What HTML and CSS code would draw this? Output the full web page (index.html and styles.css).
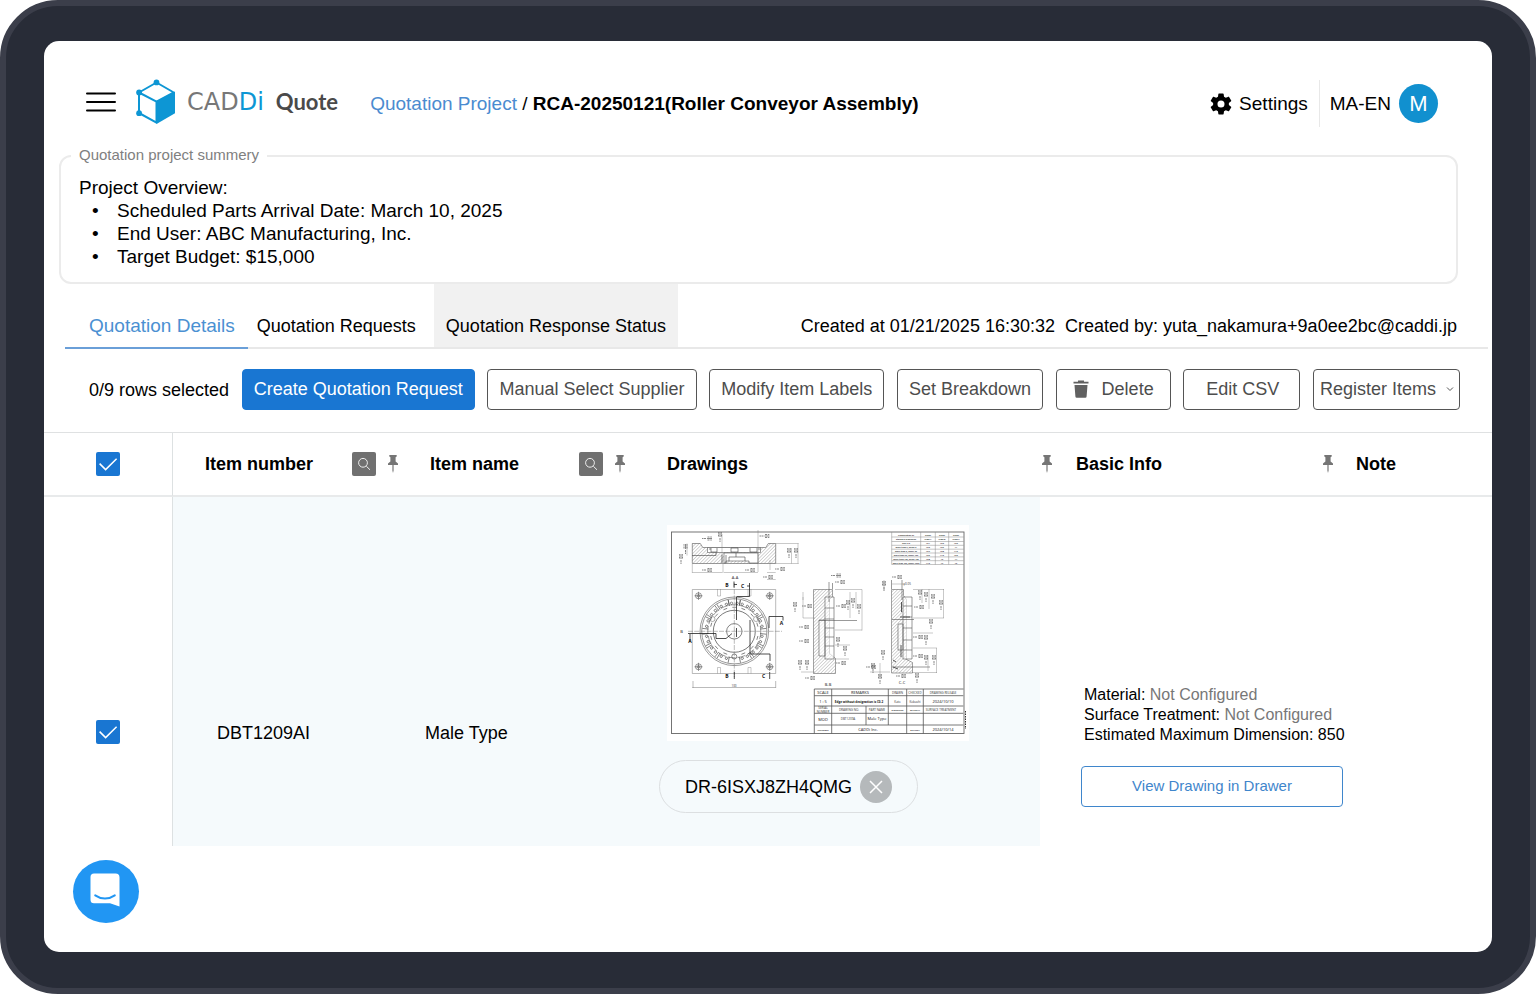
FILE: index.html
```html
<!DOCTYPE html>
<html lang="en">
<head>
<meta charset="utf-8">
<meta name="viewport" content="width=device-width, initial-scale=1">
<title>CADDi Quote</title>
<link rel="stylesheet" href="styles.css">
</head>
<body>
<svg class="defs" width="0" height="0" aria-hidden="true">
  <symbol id="pin" viewBox="0 0 10 18"><path d="M1.3 0h7.4v1.6L7.6 2.2v4.2L10 8.6V10H5.6v5.6L5 18l-.6-2.4V10H0V8.6l2.4-2.2V2.2L1.3 1.6z"/></symbol>
  <symbol id="search" viewBox="0 0 24 24"><circle cx="11" cy="10.8" r="4.4"/><path d="M14.3 14.2l3.7 3.6"/></symbol>
  <symbol id="check" viewBox="0 0 24 24"><path d="M3.6 11.6l6 6L20.6 6.8"/></symbol>
</svg>
<div class="device">
  <div class="screen">
    <header class="header">
      <button class="menu" type="button" aria-label="Menu">
        <svg width="30" height="20" viewBox="0 0 30 20"><path d="M1 1.400h28M1 10h28M1 18.600h28"/></svg>
      </button>
      <a class="brand" href="#">
        <svg class="brand-cube" width="40" height="46" viewBox="0 0 40 46" aria-hidden="true">
          <path class="cube-line" d="M20.500 3.500L37.800 13.500 20.500 22.600 3 13.500zM3 13.500V34l17.500 9.600V22.600"/>
          <path class="cube-fill" d="M20.500 22.300L39 12.600V34.300L20.500 45z"/>
          <circle class="cube-fill" cx="20.500" cy="3.400" r="2.900"/><circle class="cube-fill" cx="3.100" cy="13.400" r="2.900"/><circle class="cube-fill" cx="3.100" cy="34.200" r="2.900"/>
        </svg>
        <span class="brand-name">CAD<span class="brand-accent">Di</span></span>
        <span class="brand-product">Quote</span>
      </a>
      <nav class="crumbs" aria-label="Breadcrumb"><a href="#">Quotation Project</a> / <strong>RCA-20250121(Roller Conveyor Assembly)</strong></nav>
      <button class="settings" type="button">
        <svg width="22" height="22" viewBox="2 2 20 20" aria-hidden="true"><path d="M19.140 12.940c.040-.300.060-.610.060-.940 0-.320-.020-.640-.070-.940l2.030-1.580a.49.49 0 0 0 .120-.610l-1.920-3.320a.488.488 0 0 0-.590-.220l-2.390.960c-.500-.380-1.030-.700-1.620-.940l-.360-2.540a.484.484 0 0 0-.480-.410h-3.840c-.240 0-.430.170-.470.410l-.360 2.540c-.590.240-1.130.570-1.620.940l-2.390-.960c-.220-.080-.470 0-.590.220L2.740 8.870c-.120.210-.080.470.120.610l2.030 1.580c-.050.300-.090.630-.090.940s.020.640.070.940l-2.030 1.580a.49.49 0 0 0-.120.610l1.920 3.320c.120.220.370.290.590.220l2.390-.960c.500.380 1.030.700 1.620.940l.360 2.540c.050.240.240.410.480.410h3.840c.240 0 .440-.170.470-.410l.360-2.540c.590-.240 1.130-.560 1.620-.940l2.390.960c.220.080.470 0 .590-.220l1.920-3.320c.120-.220.070-.470-.120-.610l-2.010-1.580zM12 15.200a3.200 3.200 0 1 1 0-6.400 3.200 3.200 0 0 1 0 6.400z"/></svg>
        Settings
      </button>
      <div class="account"><span>MA-EN</span><span class="avatar">M</span></div>
    </header>

    <fieldset class="summary">
      <legend>Quotation project summery</legend>
      <p>Project Overview:</p>
      <ul>
        <li>Scheduled Parts Arrival Date: March 10, 2025</li>
        <li>End User: ABC Manufacturing, Inc.</li>
        <li>Target Budget: $15,000</li>
      </ul>
    </fieldset>

    <div class="tabbar">
      <nav class="tabs">
        <a class="tab tab-active" href="#">Quotation Details</a>
        <a class="tab tab-requests" href="#">Quotation Requests</a>
        <a class="tab tab-hover" href="#">Quotation Response Status</a>
      </nav>
      <div class="meta"><span>Created at 01/21/2025 16:30:32</span><span>Created by: yuta_nakamura+9a0ee2bc@caddi.jp</span></div>
    </div>

    <div class="toolbar">
      <span>0/9 rows selected</span>
      <button class="btn btn-primary" type="button">Create Quotation Request</button>
      <button class="btn" type="button">Manual Select Supplier</button>
      <button class="btn" type="button">Modify Item Labels</button>
      <button class="btn" type="button">Set Breakdown</button>
      <button class="btn btn-delete" type="button">
        <svg width="16" height="18" viewBox="0 0 16 18" aria-hidden="true"><path d="M5 .5h6v1.200h4.500V3.500H.5V1.700H5zM1.500 5h13l-.9 11.500q-.1 1.200-1.300 1.200H3.700q-1.200 0-1.300-1.200z"/></svg>
        Delete
      </button>
      <button class="btn btn-csv" type="button">Edit CSV</button>
      <button class="btn btn-register" type="button" aria-haspopup="menu">Register Items
        <svg width="8" height="6" viewBox="0 0 8 6" aria-hidden="true"><path d="M1 1.500l3 3 3-3"/></svg>
      </button>
    </div>

    <table class="items">
      <colgroup><col class="col-check"><col class="col-number"><col class="col-name"><col class="col-drawings"><col class="col-info"><col class="col-note"></colgroup>
      <thead>
        <tr>
          <th><label class="check"><input type="checkbox" checked aria-label="Select all rows"><svg aria-hidden="true"><use href="#check"/></svg></label></th>
          <th class="cell-number"><div class="head"><span class="title">Item number</span><button class="find" type="button" aria-label="Search item number"><svg><use href="#search"/></svg></button><svg class="pin" aria-hidden="true"><use href="#pin"/></svg></div></th>
          <th class="cell-name"><div class="head"><span class="title">Item name</span><button class="find" type="button" aria-label="Search item name"><svg><use href="#search"/></svg></button><svg class="pin" aria-hidden="true"><use href="#pin"/></svg></div></th>
          <th class="cell-drawings">Drawings</th>
          <th class="cell-info"><div class="head head-info"><svg class="pin" aria-hidden="true"><use href="#pin"/></svg><span class="title">Basic Info</span><svg class="pin" aria-hidden="true"><use href="#pin"/></svg></div></th>
          <th class="cell-note">Note</th>
        </tr>
      </thead>
      <tbody>
        <tr>
          <td class="low"><label class="check"><input type="checkbox" checked aria-label="Select DBT1209AI"><svg aria-hidden="true"><use href="#check"/></svg></label></td>
          <td class="cell-number tint low">DBT1209AI</td>
          <td class="cell-name tint low">Male Type</td>
          <td class="cell-drawings tint">
            <svg class="drawing" viewBox="667 525 302 216" role="img" aria-label="Part drawing DBT1209A">
              <defs>
                <pattern id="hatch" width="2.400" height="2.400" patternUnits="userSpaceOnUse" patternTransform="rotate(45)"><path d="M0 0V2.400" stroke="#888" stroke-width=".7"/></pattern>
                <g id="dim"><path d="M0 0h1.500M2 0h2M5 0h5M5.500-1.500h2M8.300-1.500h1.500M5.500 1.500h2M8.300 1.500h1.500" stroke="#555" stroke-width=".7"/></g>
                <g id="bolt"><circle r="3"/><circle r="1.300"/><path d="M-4 0h8M0-4v8"/></g>
                <g id="slot"><circle cx="-2.800" cy="-28" r="1.200"/><circle cx="2.800" cy="-28" r="1.200"/><path d="M-5-25.500l-1-6M5-25.500l1-6M-2-24h4"/></g>
              </defs>
              <rect x="667" y="525" width="302" height="216" fill="#fff"/>
              <g fill="none" stroke="#777" stroke-width=".6">
                <rect x="671.500" y="532" width="292.500" height="201.500" stroke="#666" stroke-width=".9"/>
                <!-- top section -->
                <path d="M692.300 543.500h8l2.500 4h63l2.500-4h7.400v20h-83.400z" fill="url(#hatch)" stroke="#555"/>
                <path d="M707.500 547.500h53v5h-53z" fill="#fff" stroke="#555"/>
                <path d="M711 548v4h6v-4M731 548h7v4h-7zM750 548v4h7v-4M709 549h2M758 549h2" stroke="#444"/>
                <path d="M724 563v-10h34v10h-9v-2h-23v2z" fill="#fff" stroke="#555"/>
                <path d="M729 561v-4h16v4M736 553v4M692 555.500h24v-3M722 563v-8M726 563v-8" stroke="#444"/>
                <path d="M687 543.500v12M692.300 564v9M723 564v9M692.300 572.500h30M724 572.500h34M758 530v42M767 572.500h8.700M767 579.500h8.700M775.700 543.500h23M775.700 563.500h23M791.500 548v15.500M798 543.500v20M722 534v29M770 560v10" stroke-width=".4"/>
                <!-- plate -->
                <path d="M692.300 589.500h83.400v84h-83.400zM693 681v7M775.700 681v7M692.300 687.500h83.400" stroke-width=".5"/>
                <g stroke="#555"><circle cx="734.300" cy="631.300" r="34.300"/><circle cx="734.300" cy="631.300" r="32.600"/><circle cx="734.300" cy="631.300" r="26.500" stroke-dasharray="8 2"/><circle cx="734.300" cy="631.300" r="21" stroke="#222"/><circle cx="734.300" cy="631.300" r="7.700" stroke="#333"/></g>
                <g transform="translate(734.300 631.300)" stroke="#444"><use href="#slot"/><use href="#slot" transform="rotate(22)"/><use href="#slot" transform="rotate(48)"/><use href="#slot" transform="rotate(74)"/><use href="#slot" transform="rotate(106)"/><use href="#slot" transform="rotate(132)"/><use href="#slot" transform="rotate(158)"/><use href="#slot" transform="rotate(202)"/><use href="#slot" transform="rotate(228)"/><use href="#slot" transform="rotate(254)"/><use href="#slot" transform="rotate(286)"/><use href="#slot" transform="rotate(312)"/><use href="#slot" transform="rotate(338)"/></g>
                <circle cx="712.500" cy="619" r="2.500"/><circle cx="756" cy="619" r="2.500"/><circle cx="734.300" cy="656.500" r="2.500" stroke="#333"/>
                <g stroke="#555"><use href="#bolt" x="698.500" y="595.800"/><use href="#bolt" x="769.700" y="595.800"/><use href="#bolt" x="698.500" y="666.800"/><use href="#bolt" x="769.700" y="666.800"/></g>
                <path d="M688 631.300h94M734.300 583v94" stroke-dasharray="5 1.200" stroke-width=".5"/>
                <path d="M717.500 589v7h3v-7M748 589v7h3v-7M717.500 673.500v-6h3v6M748 673.500v-6h3v6" stroke-width=".4"/>
                <path d="M734 581.500v6M736.500 597v23M749.500 583v13.500h-13M769 628v-11.500h14v4M690 634v8M688 633.500h28v5h10l6-5M736.500 628v9M750 620v34h20v7M734.300 672v7M769.700 672v7M737 584.500h-3M747 586h3" stroke="#222" stroke-width=".8"/>
                <!-- section B-B -->
                <path d="M813.500 589.500h19v7l-3 3v54l6 5v15h-22z" fill="url(#hatch)" stroke="#666"/>
                <path d="M825 597h9v62h-9zM819 620h6v36h-6zM825 608h9M825 619h9M825 628h9M825 637h9M825 646h9M819 620.500h38M829 582v20M832.500 583v6" fill="#fff" fill-opacity=".6" stroke="#555"/>
                <path d="M835 589.500h27M850 592v26M856 592v17M862 589.500v41M835 630h27M835 645h15M835 659h14M803 592v26M803 618h12M801 672h14M803 600v-3" stroke-width=".4"/>
                <!-- section C-C -->
                <path d="M891.500 589.500h12v6l3 4v60l6 3v10.500h-21z" fill="url(#hatch)" stroke="#666"/>
                <path d="M903 597h9v62h-9zM898 624h5v26h-5zM903 606h9M903 617h9M903 628h9M903 640h9M903 650h9M902 580v20M891.500 580v9M892 619.500h22M892 667h38" fill="#fff" fill-opacity=".6" stroke="#555"/>
                <path d="M901.500 602v10M900 617h10M901 645v12M893 660l3 2M893 667l5 2" stroke="#444" stroke-width=".9"/>
                <path d="M913 589.500h31M922 589v14M929 589v20M943.500 589v29M913 618h31M913 633h20M913 648h24M936.500 648v25M912 672.500h25M884 590v-10M892 584h11M870 672h20M880 663v14M928 655v16" stroke-width=".4"/>
              </g>
              <g>
                <use href="#dim" x="702" y="538.500"/><use href="#dim" x="759.500" y="536"/><use href="#dim" x="702" y="570"/><use href="#dim" x="745" y="570"/><use href="#dim" x="775" y="569"/><use href="#dim" x="763" y="577"/>
                <use href="#dim" transform="translate(720 542) rotate(-90)"/><use href="#dim" transform="translate(685.500 554) rotate(-90)"/><use href="#dim" transform="translate(681 564) rotate(-90)"/><use href="#dim" transform="translate(789 558) rotate(-90)"/><use href="#dim" transform="translate(796 558) rotate(-90)"/>
                <use href="#dim" x="831" y="575.500"/><use href="#dim" x="835" y="582"/><use href="#dim" x="892" y="577"/><use href="#dim" x="836" y="606"/><use href="#dim" x="802" y="606"/><use href="#dim" x="799" y="627"/><use href="#dim" x="799" y="641"/><use href="#dim" x="805" y="678"/><use href="#dim" x="836" y="663"/><use href="#dim" x="896" y="676"/><use href="#dim" x="866" y="667"/><use href="#dim" x="913" y="637"/><use href="#dim" x="913" y="656"/><use href="#dim" x="914" y="607"/>
                <use href="#dim" transform="translate(795 612) rotate(-90)"/><use href="#dim" transform="translate(848 610) rotate(-90)"/><use href="#dim" transform="translate(853 608) rotate(-90)"/><use href="#dim" transform="translate(859 614) rotate(-90)"/><use href="#dim" transform="translate(800 670) rotate(-90)"/><use href="#dim" transform="translate(807 670) rotate(-90)"/><use href="#dim" transform="translate(838 647) rotate(-90)"/><use href="#dim" transform="translate(845 656) rotate(-90)"/><use href="#dim" transform="translate(884 591) rotate(-90)"/><use href="#dim" transform="translate(920 600) rotate(-90)"/><use href="#dim" transform="translate(926 602) rotate(-90)"/><use href="#dim" transform="translate(933 604) rotate(-90)"/><use href="#dim" transform="translate(941 610) rotate(-90)"/><use href="#dim" transform="translate(931 629) rotate(-90)"/><use href="#dim" transform="translate(926 645) rotate(-90)"/><use href="#dim" transform="translate(934 665) rotate(-90)"/><use href="#dim" transform="translate(926 665) rotate(-90)"/><use href="#dim" transform="translate(873 673) rotate(-90)"/><use href="#dim" transform="translate(880 684) rotate(-90)"/><use href="#dim" transform="translate(917 683) rotate(-90)"/><use href="#dim" transform="translate(883 660) rotate(-90)"/>
              </g>
              <!-- tolerance table and title block -->
              <g fill="none" stroke="#888" stroke-width=".5">
                <path d="M891.700 532v32.500H964M920.700 532v32.500M935.300 532v32.500M948.700 532v32.500M891.700 537h72M891.700 541.500h72M891.700 545.300h72M891.700 549.200h72M891.700 553h72M891.700 556.900h72M891.700 560.700h72"/>
                <path d="M814.300 733.500V689H963.500M814.300 695.700h149M814.300 706h149M814.300 713.300h149M814.300 725h149M831.700 689v44.500M888.300 689v36M906.700 689v44.500M923.300 689v44.500M866 706v19" stroke="#555" stroke-width=".8"/>
              </g>
              <g class="grade-text">
                <text x="906" y="535.700">Classification of</text><text x="906" y="540.300">standard dimension</text><text x="906" y="544.300">Over 0.5</text><text x="906" y="548.200">More than 3, under 6</text><text x="906" y="552">More than 6, under 30</text><text x="906" y="555.900">More than 30, under 120</text><text x="906" y="559.700">More than 120, under 400</text><text x="906" y="563.600">More than 400, under 1000</text>
                <text x="928" y="535.700">Grade</text><text x="942" y="535.700">Grade</text><text x="956" y="535.700">Grade</text><text x="928" y="540.300">Class A</text><text x="942" y="540.300">Class B</text><text x="956" y="540.300">Class C</text>
                <text x="928" y="544.300">±0.1</text><text x="942" y="544.300">±0.2</text><text x="956" y="544.300">±0.5</text><text x="928" y="548.200">±0.2</text><text x="942" y="548.200">±0.5</text><text x="956" y="548.200">±1</text><text x="928" y="552">±0.3</text><text x="942" y="552">±0.8</text><text x="956" y="552">±1.5</text><text x="928" y="555.900">±0.5</text><text x="942" y="555.900">±1.2</text><text x="956" y="555.900">±2.5</text><text x="928" y="559.700">±0.8</text><text x="942" y="559.700">±2</text><text x="956" y="559.700">±4</text><text x="928" y="563.600">±1.2</text><text x="942" y="563.600">±3</text><text x="956" y="563.600">±6</text>
                <text x="897.500" y="711">DIMENSION</text><text x="915" y="711">MATERIAL</text><text x="823" y="730.500">CUSTOMER</text><text x="915" y="730.500">DELIVERY</text>
              </g>
              <g class="note-text">
                <text x="897.500" y="693.500">DRAWN</text><text x="915" y="693.500">CHECKED</text><text x="943" y="693.500">DRAWING RELEASE</text><text x="897.500" y="702.500">Kato</text><text x="915" y="702.500">Kobashi</text>
                <text x="823" y="709">SERIAL</text><text x="823" y="712.500">NUMBER</text><text x="849" y="711">DRAWING NO.</text><text x="877" y="711">PART NAME</text><text x="941" y="711">SURFACE TREATMENT</text>
                <text x="734" y="687">100</text><text x="907" y="584.500">φ0.05</text><text x="848" y="720">DBT1209A</text>
              </g>
              <g class="block-text">
                <text x="823" y="694">SCALE</text><text x="860" y="694">REMARKS</text><text x="823" y="702.500">1 : 5</text><text class="edge" x="859" y="702.500">Edge without designation is C0.2</text><text x="943" y="702.500">2024/10/10</text>
                <text x="823" y="720.500">MOD</text><text x="877" y="720">Male Type</text><text x="868" y="731">CADDi Inc.</text><text x="943" y="731">2024/10/14</text>
                <text x="735" y="578.500">A-A</text><text x="828" y="686">B-B</text><text x="902" y="684">C-C</text>
                <text x="681.500" y="633">B</text>
              </g>
              <g class="mark-text">
                <text x="690" y="643">A</text><text x="781.500" y="625">A</text><text x="727" y="587">B</text><text x="742.500" y="588">C</text><text x="727" y="678">B</text><text x="763.500" y="678">C</text>
              </g>
              <path d="M965.500 711v18" stroke="#333" stroke-width="1" stroke-dasharray="1.500 1"/>
            </svg>
            <div class="chip"><span>DR-6ISXJ8ZH4QMG</span><button class="chip-x" type="button" aria-label="Remove drawing"><svg width="32" height="32" viewBox="0 0 32 32"><path d="M10 10l12 12M22 10L10 22"/></svg></button></div>
          </td>
          <td class="cell-info">
            <div class="facts">
              <div>Material: <span>Not Configured</span></div>
              <div>Surface Treatment: <span>Not Configured</span></div>
              <div>Estimated Maximum Dimension: 850</div>
            </div>
            <button class="view" type="button">View Drawing in Drawer</button>
          </td>
          <td></td>
        </tr>
      </tbody>
    </table>

    <button class="chat" type="button" aria-label="Open chat">
      <svg width="30" height="34" viewBox="0 0 30 34"><path class="bubble" d="M4 .500h21.500q4 0 4 4V33.500l-9.500-3.300H4q-3.500 0-3.500-3.500v-22.700q0-3.500 3.500-3.500z"/><path class="smile" d="M5.200 22.300q9.800 6.600 19.600 0"/></svg>
    </button>
  </div>
</div>
</body>
</html>
```
FILE: styles.css
```css
*, *::before, *::after { box-sizing: border-box; }

body {
  margin: 0;
  background: #fff;
  color: #000;
  font: 18px/22px "Liberation Sans", Arial, sans-serif;
}

button {
  margin: 0;
  padding: 0;
  border: 0;
  background: none;
  color: inherit;
  font: inherit;
  cursor: pointer;
}

a { color: inherit; text-decoration: none; }
svg { flex: none; }
.defs { position: absolute; }

.device {
  display: flex;
  min-height: 100vh;
  padding: 35px 38px 36px;
  border: 6px solid #3b3e4a;
  border-radius: 58px;
  background: #282c37;
}

.screen {
  position: relative;
  flex: 1;
  min-width: 0;
  border-radius: 15px;
  background: #fff;
}

/* Header */
.header {
  display: flex;
  align-items: center;
  padding: 39px 54px 19px 42px;
  font-size: 19px;
}
.menu { display: flex; margin-right: 20px; padding-bottom: 4px; }
.menu path { fill: none; stroke: #000; stroke-width: 2; stroke-linecap: round; }
.brand { display: flex; align-items: center; margin: -2px 32px 0 0; padding-bottom: 2px; }
.brand-cube { margin-right: 11px; }
.brand-name { margin-right: 12px; color: #777; font: 24px/28px "DejaVu Sans", sans-serif; }
.brand-accent { color: #0d96d4; }
.brand-product { color: #4a4a4a; font: bold 22px/28px Lato, sans-serif; }
.cube-line { fill: none; stroke: #0d96d4; stroke-width: 2; stroke-linejoin: round; }
.cube-fill { fill: #0d96d4; }
.crumbs { flex: 1; }
.crumbs a { color: #4a8bd0; }
.settings { display: flex; align-items: center; gap: 7px; margin-right: 11px; }
.account {
  display: flex;
  align-items: center;
  gap: 8px;
  height: 47px;
  padding-left: 10px;
  border-left: 1px solid #e8e8e8;
}
.avatar {
  display: grid;
  place-items: center;
  width: 39px;
  height: 39px;
  border-radius: 50%;
  background: #1190cf;
  color: #fff;
  font-size: 22px;
}

/* Summary */
.summary {
  min-width: 0;
  margin: 0 34px 0 15px;
  padding: 11px 18px 14px;
  border: 2px solid #ebebeb;
  border-radius: 12px;
  font-size: 19px;
  line-height: 23px;
}
.summary legend { margin-left: -8px; padding: 0 8px 2px; color: #808080; font-size: 15px; line-height: 17px; }
.summary p { margin: 0; }
.summary ul { margin: 0; padding: 0; list-style: none; }
.summary li { display: flex; padding-left: 13px; }
.summary li::before { content: "•"; width: 25px; }

/* Tabs */
.tabbar {
  display: flex;
  justify-content: space-between;
  margin: 0 4px 0 21px;
  border-bottom: 2px solid #e8e8e8;
}
.tabs { display: flex; }
.tab { padding: 31px 12px 10px; white-space: nowrap; }
.tab-active {
  margin-bottom: -2px;
  padding-right: 13px;
  padding-left: 24px;
  border-bottom: 2px solid #6a9fd8;
  color: #4a90d2;
  font-size: 19px;
}
.tab-requests { padding-right: 18px; padding-left: 9px; }
.tab-hover { background: #f1f1f1; }
.meta { display: flex; gap: 10px; padding: 31px 31px 10px 0; white-space: nowrap; }

/* Toolbar */
.toolbar {
  display: flex;
  align-items: center;
  justify-content: space-between;
  padding: 20px 32px 22px 45px;
  white-space: nowrap;
}
.btn {
  display: flex;
  align-items: center;
  height: 41px;
  padding: 0 11px 2px;
  border: 1px solid #555;
  border-radius: 4px;
  color: #4d4d4d;
}
.btn-primary { border-color: #1976d2; background: #1976d2; color: #fff; }
.btn-delete { gap: 13px; padding-right: 16px; padding-left: 16px; }
.btn-delete path { fill: #616161; }
.btn-csv { padding-right: 20px; padding-left: 22px; }
.btn-register { gap: 10px; padding-right: 5px; padding-left: 6px; }
.btn-register path { fill: none; stroke: #555; }

/* Items */
.items { width: 100%; border-collapse: separate; border-spacing: 0; table-layout: fixed; }
.col-check { width: 128px; }
.col-number { width: 240px; }
.col-name { width: 228px; }
.col-info { width: 305px; }
.col-note { width: 147px; }
.items th, .items td { padding: 0; text-align: left; }
.items th { height: 65px; border-top: 1px solid #dfe1e2; border-bottom: 2px solid #e8eaeb; }
.items td { height: 349px; vertical-align: bottom; }
.items th.cell-number, .items td.cell-number { border-left: 1px solid #dde1e2; }
.items th.cell-number { padding: 0 14px 0 32px; }
.items td.cell-number { padding-left: 44px; }
.items th.cell-name { padding: 0 15px 0 18px; }
.items td.cell-name { padding-left: 13px; }
.items th.cell-drawings { padding-left: 27px; }
.items td.cell-drawings { padding: 28px 0 33px 19px; }
.items th.cell-info { padding: 0 12px 0 2px; }
.items td.cell-info { padding: 0 2px 39px 41px; }
.items th.cell-note { padding-left: 11px; }
.items td.low { padding-bottom: 102px; }
.items td.tint { background: #f5fafc; }
.head { display: flex; align-items: center; gap: 12px; }
.head-info { gap: 24px; }
.title { flex: 1; }
.pin { width: 10px; height: 18px; fill: #757575; }
.find { display: flex; border-radius: 2px; background: #707070; }
.find svg { width: 24px; height: 24px; fill: none; stroke: #eee; }

.check { display: grid; width: 24px; height: 24px; margin-left: 52px; }
.check input {
  grid-area: 1 / 1;
  appearance: none;
  width: 24px;
  height: 24px;
  margin: 0;
  border-radius: 2px;
  background: #1976d2;
}
.check svg { grid-area: 1 / 1; width: 24px; height: 24px; fill: none; stroke: #fff; stroke-width: 1.5; pointer-events: none; }

.drawing { display: block; width: 302px; height: 216px; margin: 0 0 19px 8px; font-family: "Open Sans", sans-serif; }
.grade-text { fill: #333; font-size: 2px; font-weight: bold; text-anchor: middle; }
.note-text { fill: #333; font-size: 3px; text-anchor: middle; }
.block-text { fill: #111; font-size: 4px; text-anchor: middle; }
.block-text .edge { font-size: 3px; font-weight: bold; }
.mark-text { fill: #111; font-size: 5px; font-weight: bold; text-anchor: middle; }

.chip {
  display: flex;
  align-items: center;
  gap: 8px;
  width: max-content;
  height: 53px;
  padding: 0 25px;
  border: 1px solid #dcdfe1;
  border-radius: 27px;
}
.chip-x { display: flex; border-radius: 50%; background: #b5b9bb; }
.chip-x path { fill: none; stroke: #fff; stroke-width: 1.5; }

.facts { margin-bottom: 21px; padding-left: 3px; font-size: 16px; line-height: 20px; white-space: nowrap; }
.facts span { color: #777; }
.view {
  width: 100%;
  height: 41px;
  padding-bottom: 2px;
  border: 1px solid #3f86cc;
  border-radius: 4px;
  color: #3f86cc;
  font-size: 15px;
}

.chat {
  position: absolute;
  bottom: 29px;
  left: 29px;
  display: grid;
  place-items: center;
  width: 66px;
  height: 63px;
  padding: 0 2px 4px 0;
  border-radius: 50%;
  background: #2196f3;
}
.bubble { fill: #fff; }
.smile { fill: none; stroke: #2196f3; stroke-width: 2; stroke-linecap: round; }
```
